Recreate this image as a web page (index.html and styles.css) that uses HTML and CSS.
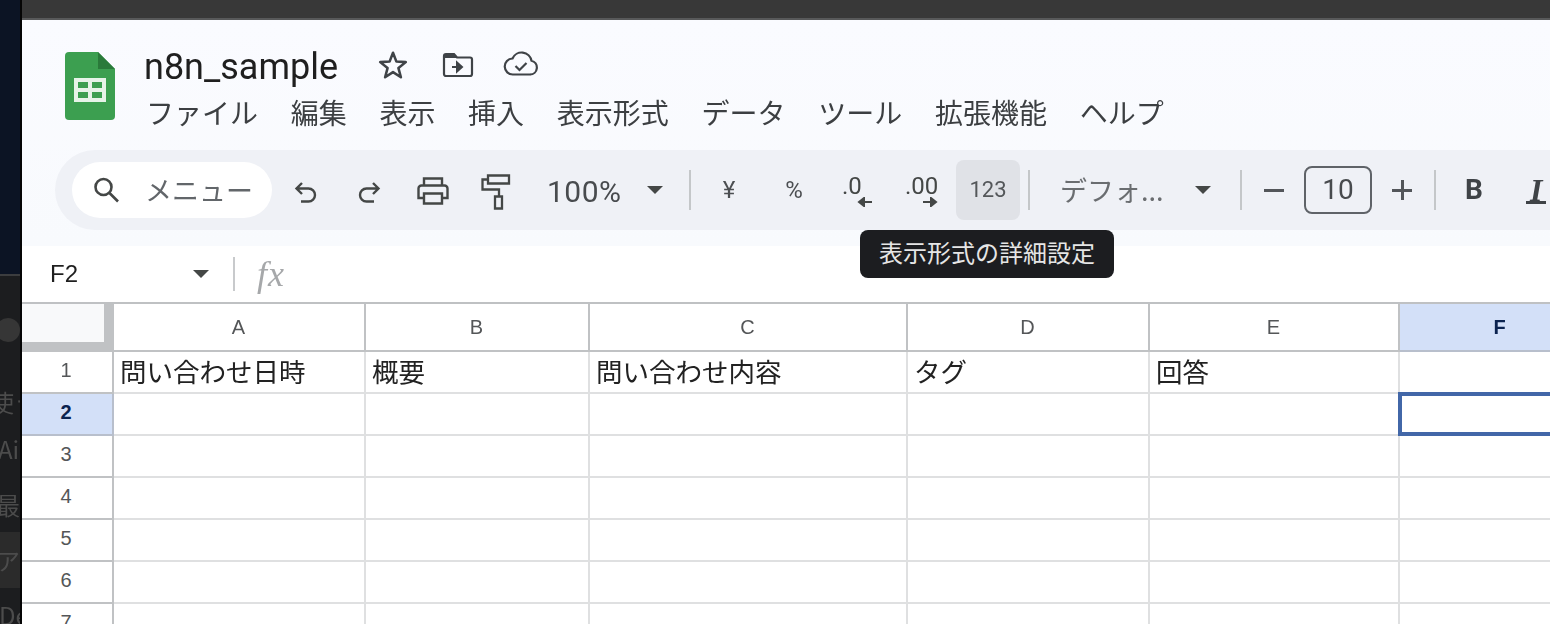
FILE: index.html
```html
<!DOCTYPE html>
<html lang="ja">
<head>
<meta charset="utf-8">
<title>n8n_sample</title>
<link rel="stylesheet" href="styles.css">
</head>
<body>
<aside class="side">
  <div class="side-top"></div>
  <div class="side-low">
    <span class="side-dot"></span>
    <span class="side-item s1">使う</span>
    <span class="side-item s2">Ai</span>
    <span class="side-item s3">最</span>
    <span class="side-item s4">ア</span>
    <span class="side-item s5">De</span>
  </div>
</aside>
<main class="win">
  <div class="topbar"></div>
  <header class="head">
    <div class="title-row">
      <svg class="logo" viewBox="0 0 50 68" width="50" height="68">
        <path d="M4 0H33L50 17V64a4 4 0 0 1-4 4H4a4 4 0 0 1-4-4V4a4 4 0 0 1 4-4Z" fill="#3c9f50"/>
        <path d="M33 0L50 17H33Z" fill="#2a7a3a"/>
        <path d="M9 26H41V50H9ZM13 30V36H23V30ZM27 30V36H37V30ZM13 40V46H23V40ZM27 40V46H37V40Z" fill="#e6f3e8" fill-rule="evenodd"/>
      </svg>
      <div class="title-col">
        <div class="name-row">
          <span class="doc-name">n8n_sample</span>
          <svg class="ic star" viewBox="0 0 30 30" width="32" height="32"><path d="M15 3.500l3.200 8.300 8.800.5-6.900 5.600 2.300 8.600-7.400-4.800-7.400 4.800 2.300-8.600L3 12.300l8.800-.5Z" fill="none" stroke="#3f4347" stroke-width="2.400" stroke-linejoin="round"/></svg>
          <svg class="ic move" viewBox="0 0 32 26" width="32" height="26"><path d="M2 4a2 2 0 0 1 2-2h8l3 3.500h13a2 2 0 0 1 2 2V22a2 2 0 0 1-2 2H4a2 2 0 0 1-2-2Z" fill="none" stroke="#3f4347" stroke-width="2.200"/><path d="M2 3h10l3 3H2Z" fill="#3f4347"/><path d="M10 15h8M15 10.500l5 4.500-5 4.500Z" fill="#3f4347" stroke="#3f4347" stroke-width="2"/></svg>
          <svg class="ic cloud" viewBox="0 0 36 26" width="36" height="26"><path d="M10 23.500h17a7 7 0 0 0 1.500-13.800A10 10 0 0 0 9.500 7.500 8 8 0 0 0 10 23.500Z" fill="none" stroke="#3f4347" stroke-width="2.200"/><path d="M12.500 15l4 4 7-7" fill="none" stroke="#3f4347" stroke-width="2.200"/></svg>
        </div>
        <nav class="menu">
          <span>ファイル</span><span>編集</span><span>表示</span><span>挿入</span><span>表示形式</span><span>データ</span><span>ツール</span><span>拡張機能</span><span>ヘルプ</span>
        </nav>
      </div>
    </div>
    <div class="toolbar">
      <div class="search">
        <svg viewBox="0 0 30 30" width="30" height="30"><circle cx="12.500" cy="12" r="8" fill="none" stroke="#444746" stroke-width="2.600"/><path d="M18.500 18l8.500 8.500" stroke="#444746" stroke-width="2.600"/></svg>
        <span>メニュー</span>
      </div>
      <svg class="tb undo" viewBox="0 0 26 26" width="26" height="26"><path d="M9 3L3.500 8.500 9 14M4 8.500h11.500a6.500 6.500 0 0 1 0 13H8" fill="none" stroke="#444746" stroke-width="2.400"/></svg>
      <svg class="tb redo" viewBox="0 0 26 26" width="26" height="26"><path d="M17 3l5.500 5.500L17 14M22 8.500H10.500a6.500 6.500 0 0 0 0 13H18" fill="none" stroke="#444746" stroke-width="2.400"/></svg>
      <svg class="tb print" viewBox="0 0 32 28" width="32" height="28"><path d="M7 8.500V1.500h18v7M7 21H1.500V11.500a3 3 0 0 1 3-3h23a3 3 0 0 1 3 3V21H25M7 16.500h18v10H7Z" fill="none" stroke="#444746" stroke-width="2.400"/></svg>
      <svg class="tb paint" viewBox="0 0 30 36" width="30" height="36"><path d="M7 1.500h21v8H7ZM7 5.500H1.500v10H18v7M14 22.500h7v12h-7Z" fill="none" stroke="#444746" stroke-width="2.300"/></svg>
      <span class="zoom-val">100%</span>
      <span class="caret c-zoom"></span>
      <span class="sep s-a"></span>
      <span class="tb-txt yen">¥</span>
      <span class="tb-txt pct">%</span>
      <span class="dec d1">.0<svg viewBox="0 0 16 10" width="16" height="10"><path d="M15 5H4M7 1L2 5l5 4Z" fill="#444746" stroke="#444746" stroke-width="2"/></svg></span>
      <span class="dec d2">.00<svg viewBox="0 0 16 10" width="16" height="10"><path d="M1 5h11M9 1l5 4-5 4Z" fill="#444746" stroke="#444746" stroke-width="2"/></svg></span>
      <span class="fmt">123</span>
      <span class="sep s-b"></span>
      <span class="font-name">デフォ...</span>
      <span class="caret c-font"></span>
      <span class="sep s-c"></span>
      <span class="minus"></span>
      <span class="size">10</span>
      <span class="plus"></span>
      <span class="sep s-d"></span>
      <span class="bold">B</span>
      <span class="ital">I</span>
    </div>
    <div class="tooltip">表示形式の詳細設定</div>
  </header>
  <div class="fbar">
    <span class="cellref">F2</span>
    <span class="caret c-ref"></span>
    <span class="sep s-f"></span>
    <span class="fx">fx</span>
  </div>
  <div class="sheet">
    <div class="corner"></div>
    <div class="ch">A</div><div class="ch">B</div><div class="ch">C</div><div class="ch">D</div><div class="ch">E</div><div class="ch sel">F</div>

    <div class="rh">1</div><div class="c">問い合わせ日時</div><div class="c">概要</div><div class="c">問い合わせ内容</div><div class="c">タグ</div><div class="c">回答</div><div class="c"></div>
    <div class="rh sel">2</div><div class="c"></div><div class="c"></div><div class="c"></div><div class="c"></div><div class="c"></div><div class="c active"></div>
    <div class="rh">3</div><div class="c"></div><div class="c"></div><div class="c"></div><div class="c"></div><div class="c"></div><div class="c"></div>
    <div class="rh">4</div><div class="c"></div><div class="c"></div><div class="c"></div><div class="c"></div><div class="c"></div><div class="c"></div>
    <div class="rh">5</div><div class="c"></div><div class="c"></div><div class="c"></div><div class="c"></div><div class="c"></div><div class="c"></div>
    <div class="rh">6</div><div class="c"></div><div class="c"></div><div class="c"></div><div class="c"></div><div class="c"></div><div class="c"></div>
    <div class="rh">7</div><div class="c"></div><div class="c"></div><div class="c"></div><div class="c"></div><div class="c"></div><div class="c"></div>
  </div>
</main>
</body>
</html>
```
FILE: styles.css
```css
* { box-sizing: border-box; }
html, body { margin: 0; height: 100%; }
body {
  display: flex;
  width: 1550px;
  height: 624px;
  overflow: hidden;
  background: #fff;
  font-family: "Liberation Sans", "Noto Sans CJK JP", sans-serif;
}
.side {
  width: 22px;
  flex: none;
  display: flex;
  flex-direction: column;
  background: #1c1d1f;
  overflow: hidden;
  border-right: 2px solid #050505;
  filter: blur(0.6px);
}
.side-top { height: 276px; flex: none; background: #0c1424; border-bottom: 2px solid #3c3d3f; }
.side-low { position: relative; flex: 1; }
.side-dot { position: absolute; left: -4px; top: 42px; width: 24px; height: 24px; border-radius: 50%; background: #363636; }
.side-item { position: absolute; left: -2px; font: 24px/28px "Noto Sans CJK JP", sans-serif; color: #4c4c4c; white-space: nowrap; }
.s1 { top: 112px; left: -10px; }
.s2 { top: 159px; }
.s3 { top: 215px; left: -4px; }
.s4 { top: 256px; left: 0; width: 24px; height: 56px; padding-top: 14px; text-indent: -4px; background: #2b2b2b; }
.s5 { top: 325px; left: -1px; }

.win { flex: 1; min-width: 0; display: flex; flex-direction: column; overflow: hidden; filter: blur(0.35px); }
.topbar { height: 20px; flex: none; background: #383838; border-bottom: 2px solid #58595a; }

.head { position: relative; height: 226px; flex: none; background: linear-gradient(#fafbff, #f8fafd); }
.title-row { display: flex; padding: 32px 0 0 43px; height: 130px; }
.logo { flex: none; margin-right: 30px; }
.title-col { display: flex; flex-direction: column; }
.name-row { display: flex; align-items: center; height: 32px; margin-top: -1px; }
.doc-name { font: 36px/32px Roboto, sans-serif; color: #1f1f1f; width: 233px; margin-left: -1px; }
.ic { flex: none; margin-bottom: 4px; }
.star { margin-right: 33px; }
.move { margin-right: 29px; }
.cloud { margin-bottom: 6px; }
.menu { display: flex; gap: 32.700px; margin: 12px 0 0 1px; font: 28px/34px "Noto Sans CJK JP", sans-serif; color: #3c3f42; }

.toolbar {
  position: relative;
  margin-left: 33px;
  height: 80px;
  background: #eff1f6;
  border-radius: 40px 0 0 40px;
  display: flex;
  align-items: center;
  padding-left: 17px;
  overflow: hidden;
  color: #444746;
}
.search {
  flex: none;
  width: 200px;
  height: 56px;
  border-radius: 28px;
  background: #fff;
  display: flex;
  align-items: center;
  gap: 24px;
  padding-left: 19px;
  font: 27px/56px "Noto Sans CJK JP", sans-serif;
  color: #62666a;
  white-space: nowrap;
}
.tb { flex: none; }
.undo { margin-left: 21px; margin-top: 6px; }
.redo { margin-left: 37px; margin-top: 6px; }
.print { margin-left: 35px; margin-top: 2px; }
.paint { margin-left: 32px; margin-top: 4px; }
.zoom-val { margin-left: 36px; padding-top: 3px; font: 30px/34px Roboto, sans-serif; letter-spacing: .5px; color: #484b4e; width: 100px; flex: none; }
.caret { width: 0; height: 0; flex: none; border: 8px solid transparent; border-top: 8px solid #444746; border-bottom: 0; }
.c-zoom { margin-left: 0; }
.sep { width: 2px; height: 40px; flex: none; background: #c4c7c9; }
.s-a { margin-left: 26px; }
.tb-txt { flex: none; font: 24px/30px Roboto, sans-serif; color: #4c4f52; width: 24px; text-align: center; }
.yen { margin-left: 26px; }
.pct { margin-left: 41px; }
.dec { flex: none; position: relative; font: 24px/36px Roboto, sans-serif; color: #444746; display: block; height: 44px; white-space: nowrap; }
.dec svg { position: absolute; top: 29px; display: block; }
.d1 { margin-left: 36px; width: 50px; }
.d1 svg { left: 15px; }
.d2 { margin-left: 13px; width: 51px; }
.d2 svg { left: 17px; }
.fmt { flex: none; width: 64px; height: 60px; background: #e0e2e7; border-radius: 8px; font: 22px/60px Roboto, sans-serif; color: #54575a; text-align: center; margin-left: 0; }
.s-b { margin-left: 8px; }
.font-name { flex: none; width: 135px; margin-left: 30px; font: 27px/34px "Noto Sans CJK JP", sans-serif; color: #6a6d70; white-space: nowrap; }
.c-font { margin-left: 0; }
.s-c { margin-left: 29px; }
.minus { flex: none; width: 20px; height: 3px; background: #53565a; margin-left: 22px; }
.size { flex: none; width: 68px; height: 48px; margin-left: 20px; border: 2px solid #5f6368; border-radius: 8px; font: 28px/44px Roboto, sans-serif; color: #484b4e; text-align: center; }
.plus { flex: none; position: relative; width: 20px; height: 3px; background: #53565a; margin-left: 20px; }
.plus::after { content: ""; position: absolute; left: 8.500px; top: -8.500px; width: 3px; height: 20px; background: #53565a; }
.s-d { margin-left: 22px; }
.bold { flex: none; margin-left: 29px; font: 700 28px/34px Roboto, sans-serif; color: #3f4347; }
.ital { flex: none; margin-left: 43px; font: italic 700 32px/26px "Liberation Serif", serif; color: #3f4347; border-bottom: 3px solid #3f4347; height: 27px; padding: 0 4px; }

.tooltip {
  position: absolute;
  left: 838px;
  top: 210px;
  width: 254px;
  height: 48px;
  border-radius: 8px;
  background: #1c1d20;
  color: #e6e6e6;
  font: 24px/44px "Noto Sans CJK JP", sans-serif;
  text-align: center;
  white-space: nowrap;
  z-index: 2;
}

.fbar { height: 56px; flex: none; background: #fff; display: flex; align-items: center; padding-left: 28px; }
.cellref { flex: none; width: 143px; font: 24px/30px "Liberation Sans", sans-serif; color: #1f1f1f; }
.c-ref { margin-left: 0; }
.s-f { margin-left: 24px; height: 34px; background: #c8cacc; }
.fx { margin-left: 22px; font: italic 36px/34px "Liberation Serif", serif; letter-spacing: 1px; color: #a6a8aa; }

.sheet {
  flex: none;
  display: grid;
  grid-template-columns: 92px 252px 224px 318px 242px 250px 202px;
  grid-template-rows: 48px repeat(7, 42px);
  border-top: 2px solid #bfc1c3;
}
.corner { background: #f8f9fa; border-right: 10px solid #c0c2c4; border-bottom: 10px solid #c0c2c4; }
.ch, .rh { display: flex; align-items: center; justify-content: center; font-size: 20px; color: #545658; background: #fff; }
.ch { border-right: 2px solid #c0c2c4; border-bottom: 2px solid #c0c2c4; padding-right: 1px; }
.rh { border-right: 2px solid #c0c2c4; border-bottom: 2px solid #c0c2c4; padding: 0 2px 3px 0; }
.ch.sel, .rh.sel { background: #d3e0f8; color: #0b2350; font-weight: 700; border-color: #b8bfcc; }
.c {
  border-right: 2px solid #dfe0e1;
  border-bottom: 2px solid #dfe0e1;
  padding: 0 6px;
  font: 26.500px/38px "Noto Sans CJK JP", sans-serif;
  color: #222;
  white-space: nowrap;
  overflow: hidden;
}
.c.active { border: 4px solid #4267a8; margin: -2px 0 0 -2px; }
```
